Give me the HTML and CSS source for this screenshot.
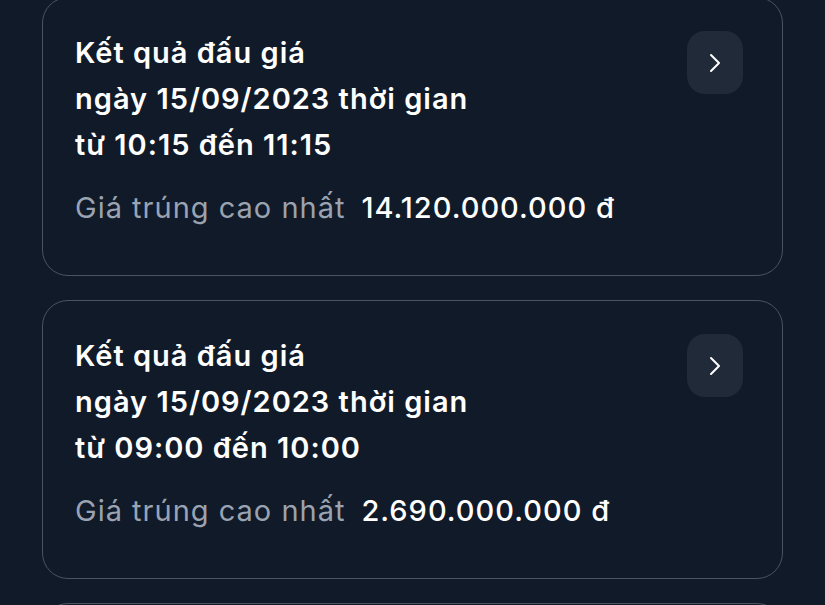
FILE: index.html
```html
<!DOCTYPE html>
<html lang="vi">
<head>
<meta charset="utf-8">
<link rel="stylesheet" href="styles.css">
</head>
<body>
<div class="list">
  <div class="card">
    <div class="content">
      <div class="title">Kết quả đấu giá<br>ngày 15/09/2023 thời gian<br>từ 10:15 đến 11:15</div>
      <div class="price"><span class="label">Giá trúng cao nhất</span><span class="value">14.120.000.000 đ</span></div>
    </div>
    <div class="btn"><svg width="18" height="22" viewBox="0 0 18 22"><path d="M5 3 L13 11 L5 19" fill="none" stroke="#ffffff" stroke-width="2" stroke-linecap="round" stroke-linejoin="round"/></svg></div>
  </div>
  <div class="card">
    <div class="content">
      <div class="title">Kết quả đấu giá<br>ngày 15/09/2023 thời gian<br>từ 09:00 đến 10:00</div>
      <div class="price"><span class="label">Giá trúng cao nhất</span><span class="value">2.690.000.000 đ</span></div>
    </div>
    <div class="btn"><svg width="18" height="22" viewBox="0 0 18 22"><path d="M5 3 L13 11 L5 19" fill="none" stroke="#ffffff" stroke-width="2" stroke-linecap="round" stroke-linejoin="round"/></svg></div>
  </div>
  <div class="card"></div>
</div>
</body>
</html>
```
FILE: styles.css
```css
html, body {
  margin: 0;
  padding: 0;
  background: #111a28;
  overflow: hidden;
}
body {
  font-family: Inter, "Noto Sans", sans-serif;
  color: #ffffff;
}
.list {
  display: flex;
  flex-direction: column;
  gap: 24px;
  padding: 0 42px;
  margin-top: -3px;
}
.card {
  display: flex;
  justify-content: space-between;
  align-items: flex-start;
  border: 1.5px solid #4a5362;
  border-radius: 26px;
  padding: 32px 39px 43px 32px;
  min-height: 202px;
  background: #111a28;
}
.title {
  font-size: 29px;
  font-weight: 600;
  line-height: 46px;
  letter-spacing: 1px;
}
.price {
  margin-top: 17px;
  font-size: 29px;
  line-height: 46px;
  letter-spacing: 1px;
  display: flex;
  gap: 16px;
}
.label {
  color: #9aa3b2;
  font-weight: 400;
}
.value {
  font-weight: 500;
  color: #ffffff;
}
.btn {
  width: 56px;
  height: 63px;
  border-radius: 18px;
  background: #212a38;
  display: flex;
  align-items: center;
  justify-content: center;
  margin-top: 1px;
}
```
